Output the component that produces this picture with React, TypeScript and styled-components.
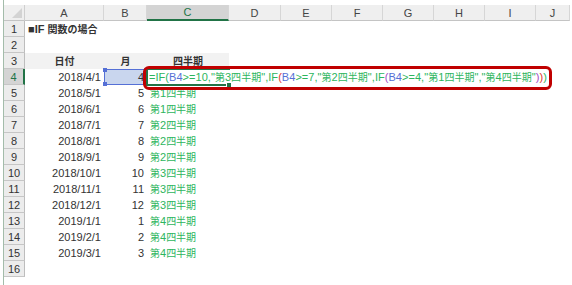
import React from "react";
import styled, { createGlobalStyle, css } from "styled-components";

// ─── Sheet geometry ───────────────────────────────────────────────────────────

const COL_WIDTHS = [21, 79, 43, 82, 52, 51, 51, 51, 51, 51, 34];
const LETTERS = ["A", "B", "C", "D", "E", "F", "G", "H", "I", "J"];
const ACTIVE_COL = 2; // C
const ACTIVE_ROW = 4;

const GREEN = "#2db55d";
const REF_BLUE = "#5570d6";
const PAREN_RED = "#e0352f";
const PAREN_PURPLE = "#a24cc4";
const EXCEL_GREEN = "#217346";

const GlobalStyle = createGlobalStyle`
  html, body {
    margin: 0;
    padding: 0;
    background: #ffffff;
  }
  body {
    font-family: "Liberation Sans", "Noto Sans CJK JP", sans-serif;
    color: #333333;
  }
`;

// ─── Frame ────────────────────────────────────────────────────────────────────

const Frame = styled.div`
  width: 572px;
  height: 285px;
  overflow: hidden;
  padding-left: 3px;
  box-sizing: border-box;
`;

const Window = styled.div`
  height: 100%;
  border-left: 1px solid #a3bcaa;
  padding-top: 5px;
  box-sizing: border-box;
`;

const Sheet = styled.div`
  display: grid;
  grid-template-columns: ${COL_WIDTHS.map((w) => `${w}px`).join(" ")};
  grid-auto-rows: 16px;
  width: max-content;
`;

// ─── Headers ──────────────────────────────────────────────────────────────────

const Corner = styled.div`
  background: #efefef;
  border-right: 1px solid #cfcfcf;
  border-bottom: 1px solid #c4c4c4;
  box-sizing: border-box;
  position: relative;

  /* Select-all triangle */
  &::after {
    content: "";
    position: absolute;
    right: 2px;
    bottom: 2px;
    border-style: solid;
    border-width: 0 0 10px 10px;
    border-color: transparent transparent #d3d3d3 transparent;
  }
`;

const ColHead = styled.div<{ $active?: boolean }>`
  display: flex;
  align-items: center;
  justify-content: center;
  font-size: 11px;
  box-sizing: border-box;
  background: #efefef;
  color: #444444;
  border-right: 1px solid #d6d6d6;
  border-bottom: 1px solid #c4c4c4;

  ${({ $active }) =>
    $active &&
    css`
      background: #d4d4d4;
      color: ${EXCEL_GREEN};
      border-bottom: 2px solid ${EXCEL_GREEN};
    `}
`;

const RowHead = styled.div<{ $active?: boolean }>`
  display: flex;
  align-items: center;
  justify-content: center;
  font-size: 11px;
  box-sizing: border-box;
  background: #ececec;
  color: #333333;
  border-right: 1px solid #bdbdbd;
  border-bottom: 1px solid #c6c6c6;

  ${({ $active }) =>
    $active &&
    css`
      background: #d4d4d4;
      color: ${EXCEL_GREEN};
      border-right: 2px solid ${EXCEL_GREEN};
    `}
`;

// ─── Cells ────────────────────────────────────────────────────────────────────

type Align = "left" | "right" | "center";

const Cell = styled.div<{
  $align?: Align;
  $bold?: boolean;
  $fill?: boolean;
  $green?: boolean;
}>`
  padding: 0 3px;
  line-height: 16px;
  white-space: pre;
  font-size: 11px;
  box-sizing: border-box;
  text-align: ${({ $align }) => $align ?? "left"};
  font-weight: ${({ $bold }) => ($bold ? 700 : 400)};
  background: ${({ $fill }) => ($fill ? "#f2f2f2" : "transparent")};
  color: ${({ $green }) => ($green ? GREEN : "#333333")};
`;

/** Referenced cell while the formula is being edited */
const RefCell = styled(Cell)`
  position: relative;
  background: #c9d6ee;
  box-shadow: inset 0 0 0 1px ${REF_BLUE};

  &::before,
  &::after {
    content: "";
    position: absolute;
    width: 4px;
    height: 4px;
    background: ${REF_BLUE};
    left: -1px;
  }
  &::before {
    top: -1px;
  }
  &::after {
    bottom: -1px;
  }
`;

const RefHandles = styled.span`
  position: absolute;
  right: -1px;
  top: -1px;
  bottom: -1px;
  width: 4px;
  display: flex;
  flex-direction: column;
  justify-content: space-between;

  &::before,
  &::after {
    content: "";
    width: 4px;
    height: 4px;
    background: ${REF_BLUE};
  }
`;

/** Active cell in edit mode: the formula text spills into the empty cells on its right */
const EditCell = styled(Cell)`
  position: relative;
  overflow: visible;
  z-index: 2;
  padding-left: 2px;
  color: ${GREEN};

  /* Green active-cell frame (open on the right where the text spills over) */
  &::before {
    content: "";
    position: absolute;
    inset: -1px;
    border: 2px solid ${EXCEL_GREEN};
    border-right: none;
    pointer-events: none;
  }

  /* Fill handle */
  &::after {
    content: "";
    position: absolute;
    right: -3px;
    bottom: -3px;
    width: 4px;
    height: 4px;
    background: ${EXCEL_GREEN};
    border: 1px solid #ffffff;
  }
`;

/** Red annotation drawn over the formula */
const Callout = styled.span`
  position: absolute;
  left: -4px;
  top: -3px;
  width: 409px;
  height: 24px;
  border: 3px solid #c00000;
  border-radius: 6px;
  box-sizing: border-box;
  pointer-events: none;
  z-index: 3;
`;

const FormulaText = styled.span`
  position: relative;
  z-index: 1;
  color: ${GREEN};
  letter-spacing: 0.04px;
`;

const Tok = styled.span<{ $tone: "ref" | "red" | "purple" }>`
  color: ${({ $tone }) =>
    $tone === "ref" ? REF_BLUE : $tone === "red" ? PAREN_RED : PAREN_PURPLE};
`;

/** Japanese runs sit slightly smaller than the Latin text, as in Excel */
const Jp = styled.span`
  font-family: "Noto Sans CJK JP", sans-serif;
  font-size: 10px;
`;

// ─── Helpers ──────────────────────────────────────────────────────────────────

const CJK = /([\u3000-\u30ff\u4e00-\u9fff]+)/;

function ja(text: string): React.ReactNode {
  return text
    .split(CJK)
    .filter(Boolean)
    .map((part, i) =>
      CJK.test(part) ? <Jp key={i}>{part}</Jp> : <React.Fragment key={i}>{part}</React.Fragment>
    );
}

// ─── Data ─────────────────────────────────────────────────────────────────────

const DATA: [string, number, string][] = [
  ["2018/4/1", 4, ""],
  ["2018/5/1", 5, "第1四半期"],
  ["2018/6/1", 6, "第1四半期"],
  ["2018/7/1", 7, "第2四半期"],
  ["2018/8/1", 8, "第2四半期"],
  ["2018/9/1", 9, "第2四半期"],
  ["2018/10/1", 10, "第3四半期"],
  ["2018/11/1", 11, "第3四半期"],
  ["2018/12/1", 12, "第3四半期"],
  ["2019/1/1", 1, "第4四半期"],
  ["2019/2/1", 2, "第4四半期"],
  ["2019/3/1", 3, "第4四半期"],
];

function Formula(): React.ReactElement {
  return (
    <FormulaText>
      {"=IF("}
      <Tok $tone="ref">B4</Tok>
      {'>=10,"'}
      {ja("第3四半期")}
      {'",IF'}
      <Tok $tone="red">(</Tok>
      <Tok $tone="ref">B4</Tok>
      {'>=7,"'}
      {ja("第2四半期")}
      {'",IF'}
      <Tok $tone="purple">(</Tok>
      <Tok $tone="ref">B4</Tok>
      {'>=4,"'}
      {ja("第1四半期")}
      {'","'}
      {ja("第4四半期")}
      {'"'}
      <Tok $tone="purple">)</Tok>
      <Tok $tone="red">)</Tok>
      {")"}
    </FormulaText>
  );
}

function EmptyCells({ from }: { from: number }): React.ReactElement {
  return (
    <>
      {LETTERS.slice(from).map((l) => (
        <Cell key={l} />
      ))}
    </>
  );
}

// ─── App ──────────────────────────────────────────────────────────────────────

export default function App(): React.ReactElement {
  return (
    <>
      <GlobalStyle />
      <Frame>
        <Window>
          <Sheet>
            <Corner />
            {LETTERS.map((l, i) => (
              <ColHead key={l} $active={i === ACTIVE_COL}>
                {l}
              </ColHead>
            ))}

            {/* Row 1: title */}
            <RowHead>1</RowHead>
            <Cell $bold>{ja("■IF 関数の場合")}</Cell>
            <EmptyCells from={1} />

            {/* Row 2 */}
            <RowHead>2</RowHead>
            <EmptyCells from={0} />

            {/* Row 3: table header */}
            <RowHead>3</RowHead>
            <Cell $bold $fill $align="center">
              {ja("日付")}
            </Cell>
            <Cell $bold $fill $align="center">
              {ja("月")}
            </Cell>
            <Cell $bold $fill $align="center">
              {ja("四半期")}
            </Cell>
            <EmptyCells from={3} />

            {DATA.map(([date, month, quarter], i) => {
              const row = i + ACTIVE_ROW;
              const isActive = row === ACTIVE_ROW;
              return (
                <React.Fragment key={row}>
                  <RowHead $active={isActive}>{row}</RowHead>
                  <Cell $align="right">{date}</Cell>
                  {isActive ? (
                    <RefCell $align="right">
                      {month}
                      <RefHandles />
                    </RefCell>
                  ) : (
                    <Cell $align="right">{month}</Cell>
                  )}
                  {isActive ? (
                    <EditCell>
                      <Formula />
                      <Callout />
                    </EditCell>
                  ) : (
                    <Cell $green>{ja(quarter)}</Cell>
                  )}
                  <EmptyCells from={3} />
                </React.Fragment>
              );
            })}

            <RowHead>16</RowHead>
            <EmptyCells from={0} />
          </Sheet>
        </Window>
      </Frame>
    </>
  );
}
